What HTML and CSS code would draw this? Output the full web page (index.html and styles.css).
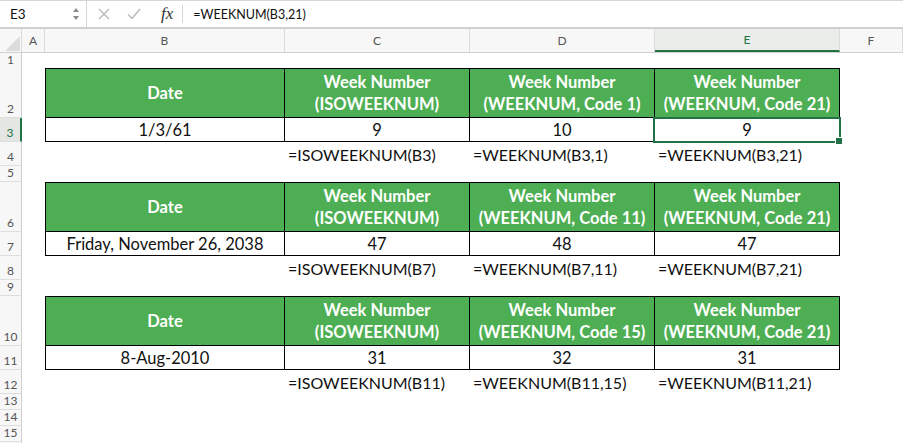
FILE: index.html
```html
<!DOCTYPE html>
<html>
<head>
<meta charset="UTF-8">
<title>WEEKNUM vs ISOWEEKNUM</title>
<link rel="stylesheet" href="styles.css">
</head>
<body>

<div class="formula_bar">
	<div class="name_box">
		<span>E3</span>
		<svg class="spin" width="8" height="16" viewBox="0 0 8 16">
			<polygon points="4,2 7,6 1,6" fill="#8a8a8a"/>
			<polygon points="1,10 7,10 4,14" fill="#8a8a8a"/>
		</svg>
	</div>
	<div class="bar_icons">
		<svg width="12" height="12" viewBox="0 0 12 12"><path d="M1 1 L11 11 M11 1 L1 11" stroke="#b9b9b9" stroke-width="1.4" fill="none"/></svg>
		<svg width="14" height="12" viewBox="0 0 14 12"><path d="M1 6.5 L5 10.5 L13 1" stroke="#b9b9b9" stroke-width="1.4" fill="none"/></svg>
		<span class="fx">fx</span>
	</div>
	<div class="formula">=WEEKNUM(B3,21)</div>
</div>

<div class="sheet">
	<div class="row col_head">
		<div class="corner"><svg width="16" height="16" viewBox="0 0 16 16"><polygon points="16,1 16,16 1,16" fill="#dcdcdc"/></svg></div>
		<div>A</div><div>B</div><div>C</div><div>D</div><div class="cur">E</div><div>F</div>
	</div>

	<div class="row h15"><div class="rh">1</div><div></div><div></div><div></div><div></div><div></div><div></div></div>
	<div class="row h50">
		<div class="rh">2</div><div></div>
		<div class="cell hd first">Date</div>
		<div class="cell hd">Week Number<br>(ISOWEEKNUM)</div>
		<div class="cell hd">Week Number<br>(WEEKNUM, Code 1)</div>
		<div class="cell hd">Week Number<br>(WEEKNUM, Code 21)</div>
		<div></div>
	</div>
	<div class="row h24">
		<div class="rh cur">3</div><div></div>
		<div class="cell val first">1/3/61</div>
		<div class="cell val">9</div>
		<div class="cell val">10</div>
		<div class="cell val sel">9</div>
		<div></div>
	</div>
	<div class="row h24">
		<div class="rh">4</div><div></div><div></div>
		<div class="fm">=ISOWEEKNUM(B3)</div>
		<div class="fm">=WEEKNUM(B3,1)</div>
		<div class="fm">=WEEKNUM(B3,21)</div>
		<div></div>
	</div>
	<div class="row h16"><div class="rh">5</div><div></div><div></div><div></div><div></div><div></div><div></div></div>

	<div class="row h50">
		<div class="rh">6</div><div></div>
		<div class="cell hd first">Date</div>
		<div class="cell hd">Week Number<br>(ISOWEEKNUM)</div>
		<div class="cell hd">Week Number<br>(WEEKNUM, Code 11)</div>
		<div class="cell hd">Week Number<br>(WEEKNUM, Code 21)</div>
		<div></div>
	</div>
	<div class="row h24">
		<div class="rh">7</div><div></div>
		<div class="cell val first">Friday, November 26, 2038</div>
		<div class="cell val">47</div>
		<div class="cell val">48</div>
		<div class="cell val">47</div>
		<div></div>
	</div>
	<div class="row h24">
		<div class="rh">8</div><div></div><div></div>
		<div class="fm">=ISOWEEKNUM(B7)</div>
		<div class="fm">=WEEKNUM(B7,11)</div>
		<div class="fm">=WEEKNUM(B7,21)</div>
		<div></div>
	</div>
	<div class="row h16"><div class="rh">9</div><div></div><div></div><div></div><div></div><div></div><div></div></div>

	<div class="row h50">
		<div class="rh">10</div><div></div>
		<div class="cell hd first">Date</div>
		<div class="cell hd">Week Number<br>(ISOWEEKNUM)</div>
		<div class="cell hd">Week Number<br>(WEEKNUM, Code 15)</div>
		<div class="cell hd">Week Number<br>(WEEKNUM, Code 21)</div>
		<div></div>
	</div>
	<div class="row h24">
		<div class="rh">11</div><div></div>
		<div class="cell val first">8-Aug-2010</div>
		<div class="cell val">31</div>
		<div class="cell val">32</div>
		<div class="cell val">31</div>
		<div></div>
	</div>
	<div class="row h24">
		<div class="rh">12</div><div></div><div></div>
		<div class="fm">=ISOWEEKNUM(B11)</div>
		<div class="fm">=WEEKNUM(B11,15)</div>
		<div class="fm">=WEEKNUM(B11,21)</div>
		<div></div>
	</div>
	<div class="row h16"><div class="rh">13</div><div></div><div></div><div></div><div></div><div></div><div></div></div>
	<div class="row h16"><div class="rh">14</div><div></div><div></div><div></div><div></div><div></div><div></div></div>
	<div class="row h16"><div class="rh">15</div><div></div><div></div><div></div><div></div><div></div><div></div></div>
	<div class="row h16"><div class="rh"></div><div></div><div></div><div></div><div></div><div></div><div></div></div>
</div>

</body>
</html>
```
FILE: styles.css
```css
* {
	box-sizing: border-box;
}
body {
	margin: 0;
	background-color: #ffffff;
	font-family: "Lato", "Open Sans", sans-serif;
	color: #111111;
	overflow: hidden;
}

/* formula bar */
.formula_bar {
	display: flex;
	align-items: center;
	height: 29px;
	border-top: 1px solid #d6d6d6;
	border-bottom: 2px solid #d0d0d0;
}
.name_box {
	display: flex;
	align-items: center;
	justify-content: space-between;
	width: 87px;
	height: 100%;
	padding: 0 6px 0 10px;
	border-right: 1px solid #d6d6d6;
	font-size: 13.5px;
}
.bar_icons {
	display: flex;
	align-items: center;
	gap: 17px;
	height: 18px;
	padding: 0 9px 0 11px;
	border-right: 1px solid #d6d6d6;
	margin-right: 10px;
}
.fx {
	font-family: "Liberation Serif", serif;
	font-style: italic;
	font-size: 17px;
	color: #333333;
	margin-left: 3px;
}
.formula {
	font-size: 12.5px;
}

/* grid */
.row {
	display: grid;
	grid-template-columns: 22px 23px 240px 185px 185px 185px 1fr;
}
.h15 { height: 15px; }
.h16 { height: 16px; }
.h24 { height: 24px; }
.h50 { height: 50px; }

.col_head {
	height: 24px;
	background-color: #f7f7f7;
	border-bottom: 1px solid #cfcfcf;
}
.col_head div {
	display: flex;
	align-items: center;
	justify-content: center;
	border-right: 1px solid #dadada;
	font-size: 12px;
	color: #555555;
}
.col_head .corner {
	align-items: flex-end;
	justify-content: flex-end;
	padding: 0 1px 1px 0;
}
.col_head .cur {
	background-color: #eaedea;
	color: #217346;
	border-bottom: 2px solid #217346;
}

.rh {
	display: flex;
	align-items: flex-end;
	justify-content: center;
	padding-bottom: 1px;
	background-color: #f7f7f7;
	border-right: 1px solid #cfcfcf;
	border-bottom: 1px solid #dedede;
	font-size: 12px;
	line-height: 14px;
	color: #555555;
}
.rh.cur {
	background-color: #e4e6e4;
	color: #217346;
	border-right: 2px solid #217346;
}

/* cells */
.cell {
	display: flex;
	align-items: center;
	justify-content: center;
	text-align: center;
	border-right: 1px solid #000000;
	border-bottom: 1px solid #000000;
	font-size: 16.5px;
}
.cell.first {
	border-left: 1px solid #000000;
}
.hd {
	border-top: 1px solid #000000;
	background-color: #4eae54;
	color: #ffffff;
	font-weight: bold;
	font-size: 16.5px;
	line-height: 22px;
}
.val {
	padding-top: 1px;
}
.sel {
	position: relative;
}
.sel::after {
	content: '';
	position: absolute;
	top: -1px;
	left: -2px;
	right: -2px;
	bottom: -2px;
	border: 2px solid #217346;
}
.sel::before {
	content: '';
	position: absolute;
	right: -4px;
	bottom: -4px;
	width: 6px;
	height: 6px;
	background-color: #217346;
	border: 1px solid #ffffff;
	z-index: 1;
}
.fm {
	display: flex;
	align-items: flex-end;
	padding: 0 0 2px 3px;
	font-size: 16px;
	white-space: nowrap;
}
```
